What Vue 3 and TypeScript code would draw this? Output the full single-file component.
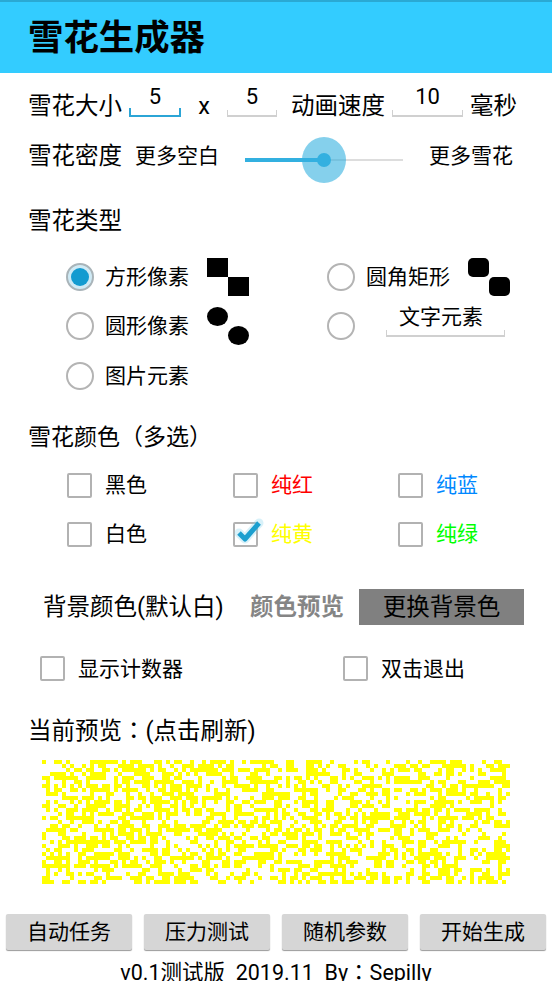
<script setup lang="ts">
import { computed } from 'vue'

const cols = 117
const rows = 31
const cell = 4

const pixelPath = computed(() => {
  let seed = 20191
  const next = () => {
    seed = (seed * 1664525 + 1013904223) >>> 0
    return (seed >>> 12) / 1048576
  }
  let d = ''
  for (let y = 0; y < rows; y++) {
    for (let x = 0; x < cols; x++) {
      if (next() < 0.5) d += `M${x * cell} ${y * cell}h${cell}v${cell}h-${cell}z`
    }
  }
  return d
})

const colors = [
  { label: '黑色', color: '#000000', checked: false },
  { label: '纯红', color: '#ff0000', checked: false },
  { label: '纯蓝', color: '#0088ff', checked: false },
  { label: '白色', color: '#000000', checked: false },
  { label: '纯黄', color: '#ffff00', checked: true },
  { label: '纯绿', color: '#00ff00', checked: false },
]
const actions = ['自动任务', '压力测试', '随机参数', '开始生成']
</script>

<template>
  <div class="page">
    <header class="bar">雪花生成器</header>

    <div class="row size-row">
      <span>雪花大小</span>
      <span class="field focus w52">5</span>
      <span class="times">x</span>
      <span class="field w50">5</span>
      <span class="speed">动画速度</span>
      <span class="field w71">10</span>
      <span>毫秒</span>
    </div>

    <div class="row density-row">
      <span>雪花密度</span>
      <span class="small more-blank">更多空白</span>
      <div class="slider">
        <div class="track-on"></div>
        <div class="track-off"></div>
        <div class="halo"></div>
        <div class="thumb"></div>
      </div>
      <span class="small">更多雪花</span>
    </div>

    <div class="title type-title">雪花类型</div>

    <div class="types">
      <div class="type">
        <span class="radio on"><i></i></span>
        <span class="small">方形像素</span>
        <svg class="shape" width="42" height="38" viewBox="0 0 42 38"><rect x="0" y="0" width="21" height="19" /><rect x="21" y="19" width="21" height="19" /></svg>
      </div>
      <div class="type">
        <span class="radio"></span>
        <span class="small">圆角矩形</span>
        <svg class="shape" width="42" height="38" viewBox="0 0 42 38"><rect x="0" y="0" width="21" height="19" rx="5" /><rect x="21" y="19" width="21" height="19" rx="5" /></svg>
      </div>
      <div class="type">
        <span class="radio"></span>
        <span class="small">圆形像素</span>
        <svg class="shape" width="42" height="38" viewBox="0 0 42 38"><ellipse cx="10.5" cy="9.5" rx="10.5" ry="9.5" /><ellipse cx="31.5" cy="28.5" rx="10.5" ry="9.5" /></svg>
      </div>
      <div class="type">
        <span class="radio"></span>
        <span class="small field text-field">文字元素</span>
      </div>
      <div class="type">
        <span class="radio"></span>
        <span class="small">图片元素</span>
      </div>
    </div>

    <div class="title color-title">雪花颜色<span class="cjk-punct">（</span>多选<span class="cjk-punct">）</span></div>

    <div class="colors">
      <label v-for="c in colors" :key="c.label" class="color">
        <span class="box">
          <svg v-if="c.checked" class="tick" width="36" height="34" viewBox="0 0 36 34">
            <path d="M6 18l6 6L26 8" fill="none" stroke="#7fd0ea" stroke-width="9" stroke-linecap="round" stroke-linejoin="round" opacity=".3" />
            <path d="M6 18l6 6L26 8" fill="none" stroke="#1c9fcf" stroke-width="5" stroke-linejoin="round" />
          </svg>
        </span>
        <span class="small" :style="{ color: c.color }">{{ c.label }}</span>
      </label>
    </div>

    <div class="bg-row">
      <span class="bg-label">背景颜色(默认白)</span>
      <span class="bg-preview">颜色预览</span>
      <span class="bg-button">更换背景色</span>
    </div>

    <div class="options">
      <label class="option first"><span class="box"></span><span class="small">显示计数器</span></label>
      <label class="option"><span class="box"></span><span class="small">双击退出</span></label>
    </div>

    <div class="title preview-title">当前预览<span class="cjk-punct">：</span>(点击刷新)</div>

    <svg class="preview" :width="cols * cell" :height="rows * cell" :viewBox="`0 0 ${cols * cell} ${rows * cell}`" shape-rendering="crispEdges">
      <path :d="pixelPath" fill="#ffff00" />
    </svg>

    <div class="actions">
      <button v-for="a in actions" :key="a" class="action" type="button">{{ a }}</button>
    </div>

    <div class="footer">v0.1测试版&nbsp;&nbsp;2019.11&nbsp;&nbsp;By<span class="cjk-punct">：</span>Sepilly</div>
  </div>
</template>

<style>
html, body { margin: 0; background: #fff; overflow: hidden; }
</style>

<style scoped>
.page {
  width: 552px;
  height: 981px;
  overflow: hidden;
  background: #fff;
  color: #000;
  font-family: Roboto, "Noto Sans CJK SC", sans-serif;
  font-size: 23.5px;
  line-height: 30px;
  display: flex;
  flex-direction: column;
}
.cjk-punct { font-family: "Noto Sans CJK TC", sans-serif; line-height: 1; }
.bar {
  height: 73px;
  box-sizing: border-box;
  flex: none;
  background: #33ccff;
  border-top: 2px solid #2aa9d4;
  padding: 0 0 0 28px;
  font-size: 35.4px;
  font-weight: 700;
  line-height: 72px;
}
.row { display: flex; align-items: center; padding-left: 28px; flex: none; white-space: nowrap; }
.size-row { height: 50px; margin-top: 8px; }
.field {
  display: block;
  box-sizing: border-box;
  height: 26px;
  border: solid #d0d0d0;
  border-width: 0 1px 2px;
  border-image: linear-gradient(to bottom, transparent 0 20px, #d0d0d0 20px) 1;
  text-align: center;
  font-size: 22px;
  line-height: 12px;
  margin-top: -5px;
}
.field.focus { border-image: linear-gradient(to bottom, transparent 0 18px, #2ba5d6 18px) 1; border-width: 0 2px 2px; }
.w52 { width: 52px; margin-left: 7px; }
.w50 { width: 50px; }
.w71 { width: 71px; margin: -5px 7px 0; }
.times { width: 46px; text-align: center; }
.speed { margin-left: 14px; }
.density-row { height: 50px; }
.small { font-size: 21px; }
.more-blank { margin-left: 13px; }
.slider { position: relative; width: 158px; height: 50px; margin: 0 26px; flex: none; }
.track-on { position: absolute; left: 0; top: 27px; width: 79px; height: 4px; background: #33b0e0; }
.track-off { position: absolute; left: 79px; top: 28px; width: 79px; height: 2px; background: #dddddd; }
.halo { position: absolute; left: 57px; top: 6px; width: 44px; height: 46px; border-radius: 50%; background: rgba(51, 176, 224, .6); }
.thumb { position: absolute; left: 72px; top: 22px; width: 14px; height: 14px; border-radius: 50%; background: #33b0e0; }
.title { flex: none; padding-left: 28px; white-space: nowrap; }
.type-title { margin-top: 25px; }
.types {
  display: grid;
  grid-template-columns: 261px 1fr;
  grid-auto-rows: 49.5px;
  padding-left: 66px;
  margin-top: 16px;
  flex: none;
}
.type { display: flex; align-items: center; }
.radio {
  width: 28px;
  height: 28px;
  box-sizing: border-box;
  border: 2px solid #b4b4b4;
  border-radius: 50%;
  margin-right: 11px;
  flex: none;
  display: flex;
  align-items: center;
  justify-content: center;
}
.radio.on { background: #cfeaf5; border-color: #a9b4b9; }
.radio i { width: 18px; height: 18px; border-radius: 50%; background: #139bd0; display: block; }
.shape { margin-left: 18px; flex: none; }
.text-field {
  width: 119px;
  height: 27px;
  margin: -5px 0 0 20px;
  padding-right: 9px;
  font-size: 21px;
  line-height: 14px;
  border-image: linear-gradient(to bottom, transparent 0 21px, #d0d0d0 21px) 1;
}
.color-title { margin-top: 22px; font-size: 23px; }
.colors {
  display: grid;
  grid-template-columns: 166px 165px 1fr;
  grid-auto-rows: 49px;
  padding-left: 67px;
  margin-top: 8px;
  flex: none;
}
.color { display: flex; align-items: center; }
.box {
  position: relative;
  width: 25px;
  height: 25px;
  box-sizing: border-box;
  border: 2px solid #b2b2b2;
  border-radius: 2px;
  margin-right: 13px;
  flex: none;
}
.tick { position: absolute; left: -2px; top: -9px; }
.bg-row {
  display: flex;
  align-items: center;
  height: 36px;
  padding-left: 43px;
  margin-top: 30px;
  flex: none;
  white-space: nowrap;
}
.bg-label { width: 207px; }
.bg-preview { color: #858585; font-weight: 700; width: 109px; }
.bg-button {
  width: 165px;
  height: 36px;
  background: #808080;
  text-align: center;
  line-height: 36px;
}
.options { display: flex; padding-left: 40px; margin-top: 26px; height: 36px; flex: none; }
.option { display: flex; align-items: center; }
.option.first { width: 303px; }
.preview-title { margin-top: 29px; }
.preview { display: block; margin: 14px 0 0 42px; flex: none; }
.actions { display: flex; gap: 12px; padding: 0 6px; margin-top: 30px; flex: none; }
.action {
  width: 126px;
  height: 36px;
  padding: 0;
  border: 0;
  border-radius: 2px;
  background: #d6d6d6;
  box-shadow: 0 1px 1px #9a9a9a;
  font: inherit;
  font-size: 21px;
  color: #000;
}
.footer { text-align: center; font-size: 21.5px; line-height: 26px; margin-top: 10px; white-space: nowrap; flex: none; }
</style>
